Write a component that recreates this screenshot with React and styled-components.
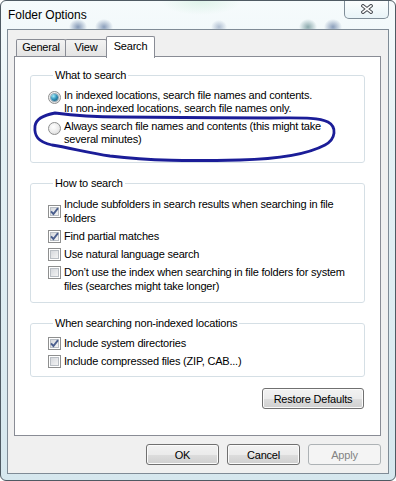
import styled, { createGlobalStyle } from "styled-components";

const GlobalStyle = createGlobalStyle`
  html, body { margin: 0; padding: 0; background: #fff; }
  body { font-family: "Liberation Sans", Arial, sans-serif; }
  * { box-sizing: border-box; }
`;

function CheckMark() {
	return (
		<svg width="9" height="9" viewBox="0 0 9 9">
			<path d="M1 4.4 L3.4 7 L8 1.2" fill="none" stroke="#4b5f8e" strokeWidth="1.9" />
		</svg>
	);
}

function CloseGlyph() {
	return (
		<svg width="12" height="10" viewBox="0 0 12 10">
			<path d="M2 1.8 L10 8.2 M10 1.8 L2 8.2" stroke="#4b4f55" strokeWidth="3.6" strokeLinecap="square" />
			<path d="M2 1.8 L10 8.2 M10 1.8 L2 8.2" stroke="#fff" strokeWidth="1.6" strokeLinecap="square" />
		</svg>
	);
}

function Scribble() {
	return (
		<Overlay viewBox="0 0 396 481" width="396" height="481">
			<path
				d="M55 113 C44 115, 36 119, 35 126 C34 136, 38 142, 52 145 C70 148, 90 153, 110 156 C150 161, 190 161, 240 160 C280 159, 310 153, 325 145 C336 139, 337 127, 328 122 C318 117, 300 118, 270 118 C220 118, 150 117, 120 117 C100 117, 70 115, 55 113"
				fill="none"
				stroke="#1b1d98"
				strokeWidth="2.8"
				strokeLinecap="round"
			/>
		</Overlay>
	);
}

function Option({ type, checked, label, offset = 1 }) {
	return (
		<Item>
			{type === "radio" ? (
				<Radio $offset={offset}>{checked && <Dot />}</Radio>
			) : (
				<Check $offset={offset}>{checked && <CheckMark />}</Check>
			)}
			<Label>{label}</Label>
		</Item>
	);
}

export default function App() {
	return (
		<>
			<GlobalStyle />
			<Window>
				<TitleBar>
					<Title>Folder Options</Title>
					<CloseButton>
						<CloseGlyph />
					</CloseButton>
				</TitleBar>
				<Client>
					<TabStrip>
						<Tab $w={50}>General</Tab>
						<Tab $w={42}>View</Tab>
						<Tab $w={49} $active>
							Search
						</Tab>
					</TabStrip>
					<Panel>
						<Group $pt={7} $pb={16} $gap={5} $lh={13}>
							<Legend>What to search</Legend>
							<Option
								type="radio"
								checked
								offset={2}
								label={
									<>
										In indexed locations, search file names and contents.
										<br />
										In non-indexed locations, search file names only.
									</>
								}
							/>
							<Option
								type="radio"
								offset={2}
								label="Always search file names and contents (this might take several minutes)"
							/>
						</Group>
						<Group $mt={13} $pt={7} $pb={9} $gap={4} $lh={14}>
							<Legend>How to search</Legend>
							<Option
								checked
								offset={8}
								label="Include subfolders in search results when searching in file folders"
							/>
							<Option checked label="Find partial matches" />
							<Option label="Use natural language search" />
							<Option label="Don’t use the index when searching in file folders for system files (searches might take longer)" />
						</Group>
						<Group $mt={13} $pt={6} $pb={8} $gap={4} $lh={14}>
							<Legend>When searching non-indexed locations</Legend>
							<Option checked label="Include system directories" />
							<Option label="Include compressed files (ZIP, CAB...)" />
						</Group>
						<RestoreRow>
							<Button $w={102}>Restore Defaults</Button>
						</RestoreRow>
					</Panel>
					<ButtonRow>
						<Button $w={73}>OK</Button>
						<Button $w={73}>Cancel</Button>
						<Button $w={73} disabled>
							Apply
						</Button>
					</ButtonRow>
				</Client>
				<Scribble />
			</Window>
		</>
	);
}

const Window = styled.div`
	position: relative;
	width: 396px;
	height: 481px;
	display: flex;
	flex-direction: column;
	border: 1px solid #4f5a63;
	border-radius: 6px;
	overflow: hidden;
	background:
		radial-gradient(ellipse 9px 8px at 77px 26px, rgba(95, 120, 160, 0.75), transparent),
		radial-gradient(ellipse 9px 8px at 103px 26px, rgba(95, 120, 160, 0.7), transparent),
		radial-gradient(ellipse 8px 7px at 218px 26px, rgba(95, 120, 160, 0.45), transparent),
		radial-gradient(ellipse 9px 8px at 307px 26px, rgba(95, 135, 140, 0.7), transparent),
		radial-gradient(ellipse 9px 8px at 332px 26px, rgba(95, 120, 160, 0.7), transparent),
		radial-gradient(ellipse 40px 14px at 200px 0px, rgba(200, 235, 215, 0.5), transparent),
		linear-gradient(180deg, #f6fbfc 0%, #e4f1f5 30%, #d6e7ee 100%);
`;

const Overlay = styled.svg`
	position: absolute;
	left: -1px;
	top: -1px;
	pointer-events: none;
`;

const TitleBar = styled.div`
	height: 28px;
	display: flex;
	align-items: flex-start;
	flex-shrink: 0;
`;

const Title = styled.div`
	padding-left: 7px;
	line-height: 28px;
	font-size: 12px;
	color: #000;
`;

const CloseButton = styled.div`
	margin-left: auto;
	margin-right: 6px;
	width: 45px;
	height: 19px;
	margin-top: -1px;
	border: 1px solid #7f8d98;
	border-top: none;
	border-radius: 0 0 5px 5px;
	background: linear-gradient(180deg, rgba(255, 255, 255, 0.7), rgba(225, 240, 245, 0.6));
	display: flex;
	align-items: center;
	justify-content: center;
	padding-left: 1px;
`;

const Client = styled.div`
	flex: 1;
	margin: 0 6px 6px 6px;
	border: 1px solid #7f8b96;
	background: #f0f0f0;
	display: flex;
	flex-direction: column;
	padding: 6px 7px 8px 6px;
	font-size: 11px;
	letter-spacing: -0.2px;
	color: #000;
`;

const TabStrip = styled.div`
	display: flex;
	align-items: flex-end;
	height: 21px;
	padding-left: 2px;
	position: relative;
	z-index: 1;
	margin-bottom: -1px;
`;

const Tab = styled.div`
	width: ${(p) => p.$w}px;
	height: ${(p) => (p.$active ? 22 : 17)}px;
	margin-bottom: ${(p) => (p.$active ? -1 : 1)}px;
	border: 1px solid #898c95;
	border-bottom: none;
	border-radius: 2px 2px 0 0;
	background: ${(p) => (p.$active ? "#fff" : "linear-gradient(180deg, #f3f3f3, #e4e4e4)")};
	line-height: ${(p) => (p.$active ? 19 : 15)}px;
	text-align: center;
	position: relative;
	z-index: ${(p) => (p.$active ? 2 : 1)};
	& + & {
		margin-left: -1px;
	}
`;

const Panel = styled.div`
	flex: 1;
	border: 1px solid #898c95;
	background: #fff;
	padding-top: 11px;
	display: flex;
	flex-direction: column;
`;

const Group = styled.fieldset`
	margin: ${(p) => p.$mt || 0}px 15px 0;
	padding: ${(p) => p.$pt}px 12px ${(p) => p.$pb}px 17px;
	border: 1px solid #d5dfe5;
	border-radius: 3px;
	display: flex;
	flex-direction: column;
	gap: ${(p) => p.$gap}px;
	line-height: ${(p) => p.$lh}px;
	min-width: 0;
`;

const Legend = styled.legend`
	padding: 0 2px;
	margin-left: 5px;
	line-height: 14px;
`;

const Item = styled.div`
	display: flex;
	align-items: flex-start;
	gap: 3px;
`;

const Label = styled.div`
	flex: 1;
`;

const Radio = styled.span`
	flex-shrink: 0;
	width: 13px;
	height: 13px;
	margin-top: ${(p) => p.$offset}px;
	border: 1px solid #8e8f8f;
	border-radius: 50%;
	background: radial-gradient(circle at 40% 35%, #ffffff 0%, #ebebeb 55%, #cfcfcf 100%);
	display: flex;
	align-items: center;
	justify-content: center;
`;

const Dot = styled.span`
	width: 7px;
	height: 7px;
	border-radius: 50%;
	background: radial-gradient(circle at 35% 30%, #a5ecf7 0%, #3596be 45%, #0d4a68 100%);
	box-shadow: 0 0 0 1px rgba(30, 80, 110, 0.45);
`;

const Check = styled.span`
	flex-shrink: 0;
	width: 13px;
	height: 13px;
	margin-top: ${(p) => p.$offset}px;
	border: 1px solid #8e8f8f;
	background: #f4f4f4;
	padding: 1px;
	display: flex;
	align-items: center;
	justify-content: center;
	box-shadow: inset 0 0 0 1px #fff, inset 0 0 0 2px #b9bec4;
	background-image: linear-gradient(135deg, #d2d5da 10%, #f7f7f7 90%);
`;

const RestoreRow = styled.div`
	display: flex;
	justify-content: flex-end;
	margin: 11px 16px 0 0;
`;

const ButtonRow = styled.div`
	display: flex;
	justify-content: flex-end;
	gap: 8px;
	margin-top: 8px;
`;

const Button = styled.button`
	width: ${(p) => p.$w}px;
	height: 21px;
	padding: 0;
	font-family: "Liberation Sans", Arial, sans-serif;
	font-size: 11px;
	letter-spacing: -0.2px;
	color: #000;
	border: 1px solid #707070;
	border-radius: 3px;
	background: linear-gradient(180deg, #f2f2f2 0%, #ebebeb 50%, #dddddd 51%, #cfcfcf 100%);
	box-shadow: inset 0 0 0 1px #fbfbfb;
	&:disabled {
		border-color: #adb2b5;
		background: #f4f4f4;
		color: #838383;
		box-shadow: none;
	}
`;
